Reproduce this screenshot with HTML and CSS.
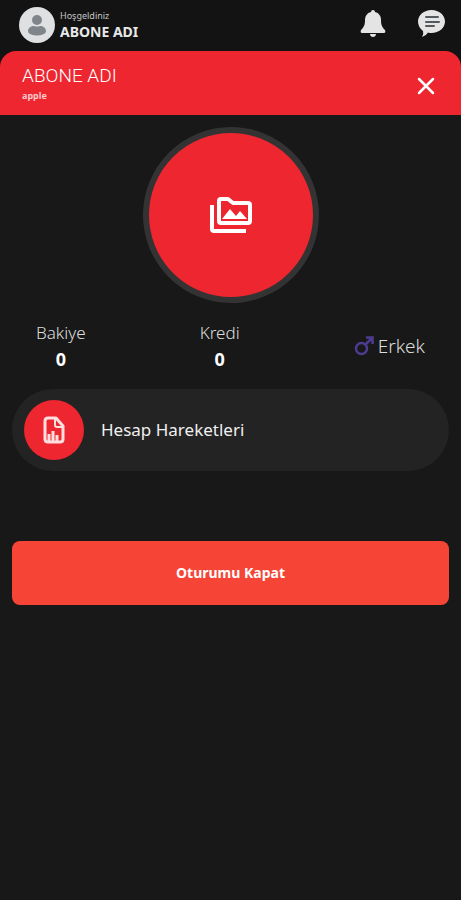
FILE: index.html
```html
<!DOCTYPE html>
<html lang="tr">
<head>
<meta charset="utf-8">
<meta name="viewport" content="width=device-width, initial-scale=1">
<title>Abone</title>
<link rel="stylesheet" href="styles.css">
</head>
<body>
<header class="topbar">
  <svg class="avatar" viewBox="0 0 36 36" aria-hidden="true">
    <circle cx="18" cy="18" r="18" fill="#dfe0e2"/>
    <circle cx="18" cy="13" r="5" fill="#80858c"/>
    <path d="M9 24c0-3 3-5 6-5q3 1 6 0c3 0 6 2 6 5q0 2-2 3q-7 3-14 0q-2-1-2-3z" fill="#80858c"/>
  </svg>
  <div class="greeting">
    <span class="welcome">Hoşgeldiniz</span>
    <strong class="user">ABONE ADI</strong>
  </div>
  <nav class="actions">
    <button class="icon-button" type="button" aria-label="Bildirimler">
      <svg class="icon" viewBox="0 0 30 30"><path d="M14 0a2 2 0 0 1 2 2c4 1 6 4 6 8 0 5 1 7 4 10q1 3-1 3H3q-2 0-1-3c3-3 4-5 4-10 0-4 2-7 6-8a2 2 0 0 1 2-2zM11 24h6c0 4-6 4-6 0z" fill="#e4e4e4"/></svg>
    </button>
    <button class="icon-button" type="button" aria-label="Mesajlar">
      <svg class="icon" viewBox="0 0 30 30"><path d="M14.500 0C22 0 28 5 28 11.500S22 23 14.500 23q-2 0-3.500-.5Q9 26 5 27q2-3 1-6Q1 17 1 11.500C1 5 7 0 14.500 0z" fill="#e4e4e4"/><path d="M9 7h12M9 12h13M9 16h8" stroke="#55585c" stroke-width="2" stroke-linecap="round"/></svg>
    </button>
  </nav>
</header>
<main class="sheet">
  <div class="sheet-header">
    <div>
      <h1 class="title">ABONE ADI</h1>
      <p class="subtitle">apple</p>
    </div>
    <button class="icon-button" type="button" aria-label="Kapat">
      <svg class="icon" viewBox="0 0 30 30"><path d="M8 10l14 14M22 10L8 24" stroke="#fff" stroke-width="2.500" stroke-linecap="round"/></svg>
    </button>
  </div>
  <div class="content">
    <button class="photo" type="button" aria-label="Fotoğraf seç">
      <svg class="photo-icon" viewBox="0 0 42 36" fill="none" stroke="#fff" stroke-width="4" stroke-linejoin="round">
        <path d="M2 8V32q0 2 2 2H36"/>
        <path d="M11 2H18l5 4H38q2 0 2 2V24q0 2-2 2H11q-2 0-2-2V4q0-2 2-2z"/>
        <path d="M12 22l8-10 6 7 4-5 7 8z" fill="#fff" stroke="none"/>
      </svg>
    </button>
    <div class="stats">
      <div class="stat"><span class="label">Bakiye</span><strong class="value">0</strong></div>
      <div class="stat"><span class="label">Kredi</span><strong class="value">0</strong></div>
      <div class="gender">
        <svg class="gender-icon" viewBox="0 0 20 20" fill="none" stroke="#4d3b91" stroke-width="2.500"><circle cx="7.500" cy="12.500" r="5.500"/><path d="M11.500 8.500l7-7M12 1.500h6.500V8"/></svg>
        <span>Erkek</span>
      </div>
    </div>
    <a class="menu-item" href="#hesap">
      <span class="badge">
        <svg class="badge-icon" viewBox="0 0 22 28" fill="none" stroke="#ffdede" stroke-width="3" stroke-linejoin="round">
          <path d="M5 2H13l7 8V23q0 3-3 3H5q-3 0-3-3V5q0-3 3-3z"/>
          <path d="M12 3v6q0 2 2 2h6" stroke-width="2"/>
          <path d="M6 25v-7M10 25v-10M14 25v-6" stroke-width="3"/>
        </svg>
      </span>
      <span>Hesap Hareketleri</span>
    </a>
    <button class="logout" type="button">Oturumu Kapat</button>
  </div>
</main>
</body>
</html>
```
FILE: styles.css
```css
* {
  box-sizing: border-box;
}

body {
  margin: 0;
  min-height: 100vh;
  display: flex;
  flex-direction: column;
  background: #131313;
  color: #fff;
  font-family: "Noto Sans", "Open Sans", sans-serif;
}

button {
  padding: 0;
  border: 0;
  background: none;
  color: inherit;
  font-family: inherit;
  cursor: pointer;
}

svg {
  display: block;
}

.topbar {
  display: flex;
  align-items: center;
  gap: 5px;
  padding: 7px 14px 8px 19px;
}

.avatar {
  width: 36px;
  height: 36px;
}

.greeting {
  display: flex;
  flex-direction: column;
  color: #e8e8e8;
}

.welcome {
  font-size: 9px;
  line-height: 14px;
  color: #c4c4c4;
}

.user {
  font-size: 14px;
  line-height: 18px;
}

.actions {
  display: flex;
  gap: 28px;
  margin-left: auto;
}

.icon {
  width: 30px;
  height: 30px;
}

.sheet {
  flex: 1;
  background: linear-gradient(#131313 32px, #181818 32px);
}

.sheet-header {
  display: flex;
  align-items: center;
  justify-content: space-between;
  padding: 13px 20px 12px 22px;
  border-radius: 16px 16px 0 0;
  background: #ed2630;
}

.title {
  margin: 0;
  font: 300 19px/24px Roboto, sans-serif;
}

.subtitle {
  margin: 0;
  font-size: 9px;
  font-weight: 700;
  line-height: 15px;
  color: #ffc8ca;
}

.content {
  display: flex;
  flex-direction: column;
  padding: 12px;
}

.photo {
  align-self: center;
  display: grid;
  place-items: center;
  width: 176px;
  height: 176px;
  border: 6px solid #333;
  border-radius: 50%;
  background: #ed2630;
}

.photo-icon {
  width: 42px;
  height: 36px;
}

.stats {
  display: flex;
  justify-content: space-between;
  align-items: center;
  margin: 16px 24px 17px;
}

.stat {
  display: flex;
  flex-direction: column;
  align-items: center;
}

.label {
  font-size: 17px;
  font-weight: 300;
  line-height: 27px;
  color: #ddd;
}

.value {
  font-size: 18px;
  line-height: 26px;
}

.gender {
  display: flex;
  align-items: center;
  gap: 4px;
  font-size: 19px;
  font-weight: 300;
  line-height: 26px;
  color: #ddd;
}

.gender-icon {
  width: 20px;
  height: 20px;
}

.menu-item {
  display: flex;
  align-items: center;
  gap: 17px;
  padding: 11px 12px;
  border-radius: 41px;
  background: #232323;
  color: #f0f0f0;
  font-size: 17px;
  line-height: 24px;
  text-decoration: none;
}

.badge {
  display: grid;
  place-items: center;
  width: 60px;
  height: 60px;
  border-radius: 50%;
  background: #ed2630;
}

.badge-icon {
  width: 22px;
  height: 28px;
}

.logout {
  margin-top: 70px;
  padding: 20px;
  border-radius: 8px;
  background: #f64436;
  font-size: 14px;
  font-weight: 700;
  line-height: 24px;
}
```
